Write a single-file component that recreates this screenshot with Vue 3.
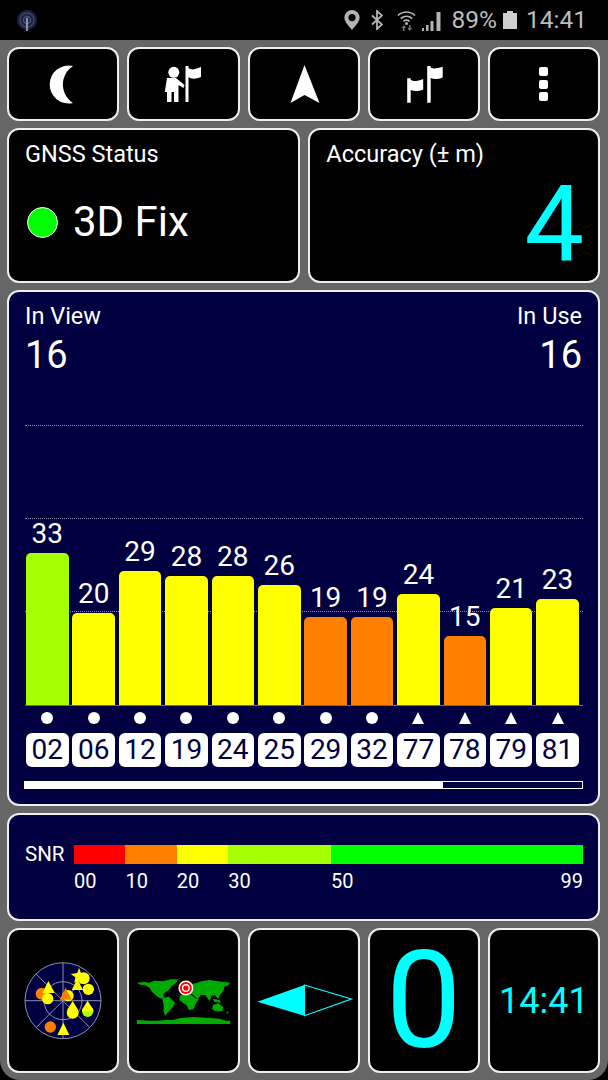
<script setup>
const colors = { lime: '#a6ff00', yellow: '#ffff00', orange: '#ff8000' }
const sats = [
  { id: '02', snr: 33, c: 'lime', mark: 'dot' },
  { id: '06', snr: 20, c: 'yellow', mark: 'dot' },
  { id: '12', snr: 29, c: 'yellow', mark: 'dot' },
  { id: '19', snr: 28, c: 'yellow', mark: 'dot' },
  { id: '24', snr: 28, c: 'yellow', mark: 'dot' },
  { id: '25', snr: 26, c: 'yellow', mark: 'dot' },
  { id: '29', snr: 19, c: 'orange', mark: 'dot' },
  { id: '32', snr: 19, c: 'orange', mark: 'dot' },
  { id: '77', snr: 24, c: 'yellow', mark: 'tri' },
  { id: '78', snr: 15, c: 'orange', mark: 'tri' },
  { id: '79', snr: 21, c: 'yellow', mark: 'tri' },
  { id: '81', snr: 23, c: 'yellow', mark: 'tri' }
]
const barStyle = (s) => ({ height: s.snr * 4.62 + 'px', background: colors[s.c] })
const segs = [
  { w: 10, c: '#ff0000', l: '00' },
  { w: 10, c: '#ff8000', l: '10' },
  { w: 10, c: '#ffff00', l: '20' },
  { w: 20, c: '#a6ff00', l: '30' },
  { w: 49, c: '#00ff00', l: '50' }
]
const fill = 75
</script>

<template>
  <div class="screen">
    <header class="status">
      <svg class="notif" width="22" height="24" viewBox="0 0 22 24">
        <circle cx="11" cy="11" r="10" fill="#1c2140" />
        <circle cx="11" cy="11" r="7" fill="none" stroke="#3b4468" stroke-width="1.5" />
        <circle cx="11" cy="11" r="3.5" fill="none" stroke="#4a5478" stroke-width="1.5" />
        <rect x="10" y="9" width="2" height="13" fill="#8f95a8" />
      </svg>
      <div class="status-right">
        <svg class="s-pin" width="16" height="20" viewBox="0 0 16 20">
          <path fill="#b4b4b4" fill-rule="evenodd" d="M8 0a7.6 7.6 0 0 1 7.6 7.6C15.600 12 11 16.500 8 20 5 16.500.4 12 .4 7.600A7.600 7.600 0 0 1 8 0zm0 4a3.600 3.600 0 1 0 0 7.200A3.600 3.600 0 0 0 8 4z" />
        </svg>
        <svg class="s-bt" width="12" height="20" viewBox="0 0 12 20">
          <path fill="none" stroke="#b4b4b4" stroke-width="1.800" d="M1 5.500l10 9-5 4.500V1l5 4.500-10 9" />
        </svg>
        <svg class="s-wifi" width="19" height="21" viewBox="0 0 19 21">
          <g fill="none" stroke="#b4b4b4" stroke-width="1.700">
            <path d="M1 5.500C6 .8 13 .8 18 5.500" />
            <path d="M3.800 8.500c3.500-3 8-3 11.400 0" />
            <path d="M6.500 11.300c2-1.600 4-1.600 6 0" />
          </g>
          <circle cx="9.500" cy="13.500" r="1.500" fill="#b4b4b4" />
          <path fill="#777" d="M6 21v-3H4.500L7 15l2 3H7.500v3zM12 15v3h-1.500l2 3 2.500-3H13.500v-3z" />
        </svg>
        <svg class="s-sig" width="20" height="19" viewBox="0 0 20 19">
          <g fill="#b4b4b4">
            <rect x="0" y="16" width="2" height="3" />
            <rect x="4" y="13" width="2.500" height="6" />
            <rect x="8.500" y="9" width="3" height="10" />
            <rect x="14.500" y="0" width="4" height="19" />
          </g>
        </svg>
        <span class="s-pct">89%</span>
        <svg class="s-bat" width="14" height="18" viewBox="0 0 14 18">
          <path fill="#cfcfcf" d="M4 0h6v2h4v16H0V2h4z" />
        </svg>
        <span class="s-time">14:41</span>
      </div>
    </header>

    <main class="body">
      <section class="row5 row-top">
        <div class="panel center">
          <svg width="40" height="40" viewBox="0 0 40 40">
            <path fill="#fff" d="M30 2A19 19 0 1 0 30 39 22 22 0 0 1 30 2Z" />
          </svg>
        </div>
        <div class="panel center">
          <svg width="40" height="40" viewBox="0 0 40 40" fill="#fff">
            <circle cx="10.800" cy="8.300" r="5.500" />
            <path d="M4 14h9l8.500 7-1 3-5-3v17H11V28H8.500v10H4V28H1.800z" />
            <path d="M22.500 2h3v2c2.500 2 5.500 2 12.500-1v10c-6 2.500-10 2-12.500 0v25h-3z" />
          </svg>
        </div>
        <div class="panel center">
          <svg width="40" height="40" viewBox="0 0 40 40">
            <path fill="#fff" d="M20.500 1 35.500 39 20.500 31 6.500 39z" />
          </svg>
        </div>
        <div class="panel center">
          <svg width="40" height="40" viewBox="0 0 40 40" fill="#fff">
            <path d="M3.200 14.300h3.500v1.500c3 2 6 1.500 12.500-.8v10.500c-5 2-9 2-12.500.5v12.700h-3.500z" />
            <path d="M23.200 2h3.500v1.500c3 1.500 6 1 12-.8v10.800c-5 2-9 2-12 .5v24.700h-3.500z" />
          </svg>
        </div>
        <div class="panel center">
          <div class="kebab"><i></i><i></i><i></i></div>
        </div>
      </section>

      <section class="row2 row-mid">
        <div class="panel pad">
          <div class="cap cap-left">GNSS Status</div>
          <div class="fix"><span class="fix-dot"></span><span class="fix-text">3D Fix</span></div>
        </div>
        <div class="panel pad">
          <div class="cap">Accuracy (± m)</div>
          <div class="acc">4</div>
        </div>
      </section>

      <section class="panel navy sky">
        <div class="counts">
          <div><div class="cap">In View</div><div class="count">16</div></div>
          <div class="right"><div class="cap">In Use</div><div class="count">16</div></div>
        </div>
        <div class="chart">
          <div class="gl" style="top:0"></div>
          <div class="gl" style="top:93px"></div>
          <div class="gl" style="top:186px"></div>
          <div class="sat-grid bars">
            <div v-for="s in sats" :key="s.id" class="col">
              <div class="snr">{{ s.snr }}</div>
              <div class="bar" :style="barStyle(s)"></div>
            </div>
          </div>
        </div>
        <div class="sat-grid marks">
          <div v-for="s in sats" :key="s.id" class="mark-cell">
            <span :class="s.mark"></span>
          </div>
        </div>
        <div class="sat-grid ids">
          <div v-for="s in sats" :key="s.id" class="sat-id">{{ s.id }}</div>
        </div>
        <div class="progress"><div class="progress-fill" :style="{ width: fill + '%' }"></div></div>
      </section>

      <section class="panel navy legend">
        <div class="legend-row">
          <span class="snr-label">SNR</span>
          <div class="scale">
            <i v-for="g in segs" :key="g.l" :style="{ flex: g.w, background: g.c }"></i>
          </div>
        </div>
        <div class="ticks">
          <span v-for="g in segs.slice(0, 4)" :key="g.l" :style="{ flex: g.w }">{{ g.l }}</span>
          <span class="tick-last" style="flex:49"><b>50</b><b>99</b></span>
        </div>
      </section>

      <section class="row5 row-bottom">
        <div class="panel">
          <svg class="fillsvg" viewBox="9.300 930 108.140 141">
            <circle cx="63.300" cy="1000.700" r="38" fill="#000040" stroke="#9090b0" stroke-width="1" />
            <circle cx="63.300" cy="1000.700" r="19" fill="none" stroke="#9090b0" stroke-width="1" />
            <g stroke="#9090b0" stroke-width="1">
              <path d="M63.300 962.700v76M25.300 1000.700h76M36.500 974l53.600 53.500M90 974l-53.500 53.500" />
            </g>
            <g transform="translate(10 945) scale(.3333)">
              <circle cx="96" cy="146" r="18" fill="#ff8000" />
              <circle cx="114" cy="161" r="17" fill="#ffff00" />
              <path d="M116 108l19 36H98z" fill="#ffff00" />
              <circle cx="175" cy="152" r="17" fill="#ffff00" />
              <path d="M168 128l18 36h-36z" fill="#ff8000" />
              <circle cx="222" cy="100" r="18" fill="#ffff00" />
              <path d="M208 68l6 16 20 4-16 11 3 16-13-10-14 9 3-17-14-10 20-3z" fill="#ffff00" />
              <path d="M203 102l17 33h-34z" fill="#ffff00" />
              <circle cx="236" cy="133" r="17" fill="#ffff00" />
              <circle cx="189" cy="203" r="18" fill="#ffff00" />
              <path d="M189 168l16 26h-32z" fill="#ffff00" />
              <circle cx="234" cy="199" r="17" fill="#a6ff00" />
              <path d="M217 199a17 17 0 0 1 1-6l16-26 16 26a17 17 0 0 1 1 6z" fill="#ffff00" />
              <circle cx="122" cy="246" r="17" fill="#ff8000" />
              <path d="M161 233l18 37h-36z" fill="#ffff00" />
            </g>
          </svg>
        </div>
        <div class="panel">
          <svg class="fillsvg" viewBox="129.440 930 108.140 141">
            <g transform="translate(130 960) scale(.3333)" fill="#00aa00">
              <polygon points="22,68 45,66 60,68 75,62 100,64 125,58 146,58 138,70 125,80 118,90 108,96 100,104 104,114 96,116 84,110 70,98 60,84 48,76 32,74" />
              <polygon points="98,114 118,110 136,128 130,142 118,154 106,168 102,150 102,134" />
              <polygon points="150,108 165,100 185,104 195,114 208,118 198,132 192,148 178,150 172,136 160,128 150,120" />
              <polygon points="160,100 165,84 178,72 200,70 215,64 240,60 265,64 302,68 296,76 284,80 282,92 272,104 266,118 256,104 246,108 240,124 228,106 214,104 205,118 190,104 176,100" />
              <polygon points="250,116 270,120 274,128 255,126" />
              <polygon points="250,135 266,130 282,142 278,154 258,154 248,148" />
              <polygon points="290,158 296,154 296,162" />
              <polygon points="22,180 60,182 80,182 110,180 130,180 150,175 190,171 230,173 270,176 290,182 302,182 302,192 22,192" />
            </g>
            <circle cx="186.300" cy="988" r="7.500" fill="#fff" />
            <circle cx="186.300" cy="988" r="6" fill="#ff0000" />
            <circle cx="186.300" cy="988" r="4" fill="#fff" />
            <circle cx="186.300" cy="988" r="2.600" fill="#ff0000" />
          </svg>
        </div>
        <div class="panel">
          <svg class="fillsvg" viewBox="249.580 930 108.140 141">
            <polygon points="257,1001.700 304,985 304,1015.700" fill="#00ffff" />
            <polygon points="304,985 351,999 304,1015.700" fill="none" stroke="#00ffff" stroke-width="1.200" />
          </svg>
        </div>
        <div class="panel center"><span class="big-zero">0</span></div>
        <div class="panel center"><span class="clock">14:41</span></div>
      </section>
    </main>
  </div>
</template>

<style scoped>
.screen {
  width: 608px;
  height: 1080px;
  font-family: Roboto, "Noto Sans", sans-serif;
  color: #fff;
  overflow: hidden;
}
.status {
  height: 40px;
  background: #000;
  display: flex;
  align-items: center;
  justify-content: space-between;
  padding: 0 21px 0 16px;
  box-sizing: border-box;
}
.notif { margin-top: 2px; }
.status-right {
  display: flex;
  align-items: center;
  color: #bdbdbd;
  font-size: 24.500px;
  line-height: 40px;
}
.s-bt { margin-left: 11px; }
.s-wifi { margin-left: 14px; }
.s-sig { margin-left: 6px; margin-top: 2px; }
.s-pct { margin-left: 9.500px; }
.s-bat { margin-left: 6px; }
.s-time { margin-left: 9px; }

.body {
  height: 1040px;
  box-sizing: border-box;
  background: #666;
  padding: 7px 8px 7px 7.300px;
  border-radius: 0 0 20px 20px;
  display: flex;
  flex-direction: column;
  gap: 7px;
}
.panel {
  background: #000;
  border: 2px solid #eee;
  border-radius: 12px;
  box-sizing: border-box;
  min-width: 0;
}
.center { display: flex; align-items: center; justify-content: center; }
.row5 { display: grid; grid-template-columns: repeat(5, 112.140px); gap: 8px; }
.row2 { display: grid; grid-template-columns: repeat(2, 292.350px); gap: 8px; }
.row-top { height: 74px; }
.row-mid { height: 155px; }
.row-bottom { height: 145px; }
.kebab { display: flex; flex-direction: column; gap: 3.500px; }
.kebab i { display: block; width: 9px; height: 9px; background: #fff; border-radius: 2px; }

.pad { padding: 10px 15px 0 16.700px; }
.cap { font-size: 23.500px; line-height: 28px; }
.cap-left { margin-left: -1px; }
.fix { display: flex; align-items: center; gap: 15px; margin-top: 34px; }
.fix-dot {
  width: 31px;
  height: 31px;
  box-sizing: border-box;
  border-radius: 50%;
  background: #00ff00;
  border: 1.500px solid #fff;
  margin-left: 1px;
}
.fix-text { font-size: 42px; line-height: 40px; }
.acc {
  font-size: 106px;
  line-height: 100px;
  color: #00ffff;
  text-align: right;
  margin: 6px -1px 0 0;
}

.navy { background: #000040; }
.sky { height: 516px; padding: 10px 15px 0 16.700px; }
.counts { display: flex; justify-content: space-between; margin: 0 1px 0 -1px; }
.right { text-align: right; }
.count { font-size: 38px; line-height: 44px; margin-top: 3px; }
.chart { position: relative; height: 280px; margin-top: 48px; border-bottom: 1px solid #66668c; margin-left: -1px; }
.gl { position: absolute; left: 0; right: 0; border-top: 1px dotted #8c8cae; }
.sat-grid {
  display: grid;
  grid-template-columns: repeat(12, 42.600px);
  column-gap: 3.800px;
}
.bars { position: relative; height: 280px; align-items: end; margin-left: 1px; }
.col { display: flex; flex-direction: column; }
.snr { font-size: 28px; line-height: 32px; text-align: center; margin-bottom: 3px; }
.bar { border-radius: 5px 5px 0 0; }
.marks { margin-top: 6px; }
.mark-cell { height: 12px; display: flex; justify-content: center; }
.dot { width: 12px; height: 12px; border-radius: 50%; background: #fff; }
.tri {
  width: 0;
  height: 0;
  border-left: 6px solid transparent;
  border-right: 6px solid transparent;
  border-bottom: 12px solid #fff;
}
.ids { margin-top: 9px; }
.sat-id {
  height: 34px;
  line-height: 34px;
  background: #fff;
  color: #000040;
  border-radius: 6px;
  font-size: 28px;
  text-align: center;
}
.progress {
  margin: 14px 0 0 -1.500px;
  height: 8px;
  box-sizing: border-box;
  border: 1.500px solid #fff;
  background: #000040;
}
.progress-fill { height: 100%; background: #fff; }

.legend { height: 108px; padding: 30px 15px 0 16.700px; }
.legend-row { display: flex; align-items: center; }
.snr-label { width: 48px; font-size: 20.500px; line-height: 19px; flex: none; text-indent: -1px; }
.scale { display: flex; flex: 1; height: 19px; }
.scale i { display: block; }
.ticks { display: flex; margin: 5px 0 0 48px; font-size: 20px; line-height: 24px; }
.ticks span { display: block; }
.tick-last { display: flex !important; justify-content: space-between; }
.tick-last b { font-weight: 400; }

.fillsvg { display: block; width: 100%; height: 100%; }
.big-zero { font-size: 135px; line-height: 130px; color: #00ffff; }
.clock { font-size: 36px; color: #00ffff; }
</style>

<style>
html, body { background: #000; }
</style>
